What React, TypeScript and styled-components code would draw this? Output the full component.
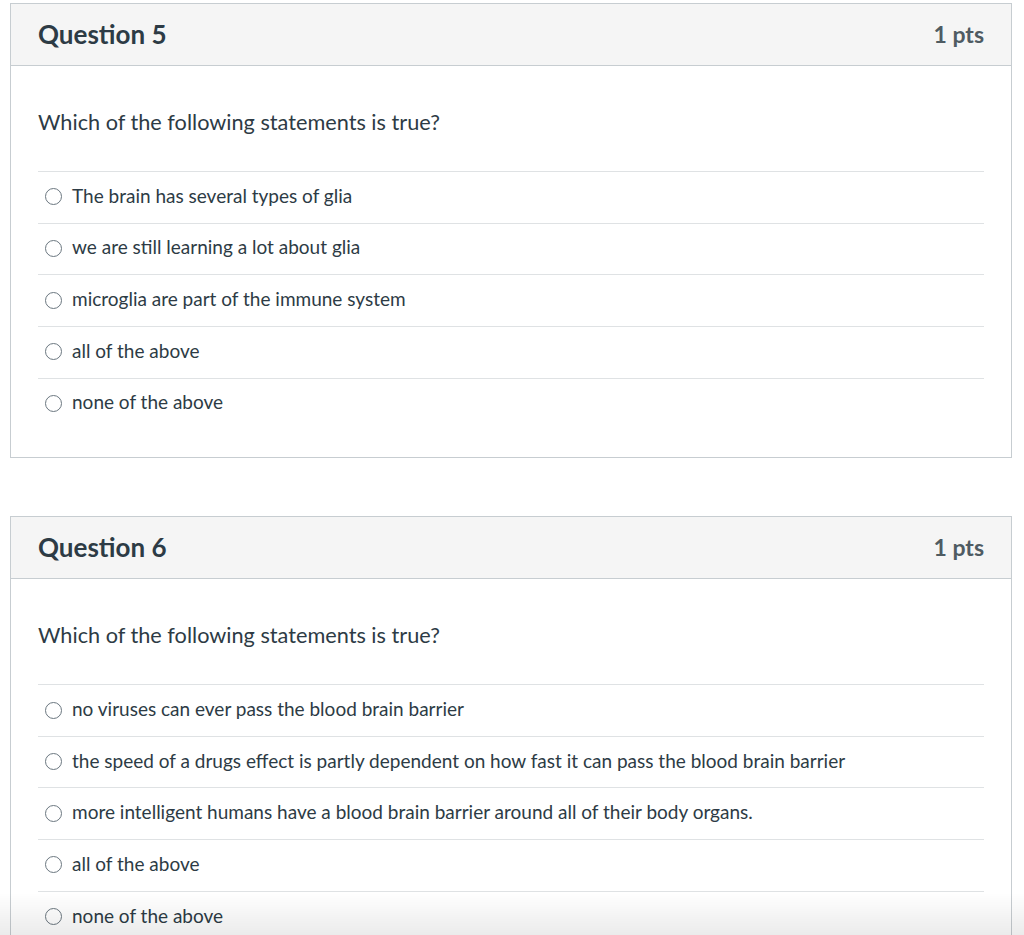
import React from "react";
import styled, { createGlobalStyle } from "styled-components";

const GlobalStyle = createGlobalStyle`
  html, body { margin: 0; padding: 0; background: #ffffff; }
  body { font-family: Lato, "Open Sans", "Liberation Sans", sans-serif; color: #2d3b45; }
  * { box-sizing: border-box; }
`;

const Page = styled.div`
  padding: 3px 12px 0 10px;
  display: flex;
  flex-direction: column;
  gap: 58px;
`;

const Card = styled.section`
  width: 1002px;
  border: 1px solid #c7cdd1;
  background: #ffffff;
`;

const Header = styled.header`
  height: 62px;
  background: #f5f5f5;
  border-bottom: 1px solid #c7cdd1;
  display: flex;
  align-items: center;
  justify-content: space-between;
  padding: 0 27px 2px;
`;

const Title = styled.h2`
  margin: 0;
  font-size: 26px;
  font-weight: 700;
  color: #2d3b45;
`;

const Points = styled.span`
  font-size: 23px;
  font-weight: 700;
  color: #4f5b62;
`;

const Body = styled.div`
  padding: 41px 27px 28px;
`;

const Prompt = styled.p`
  margin: 0 0 34px;
  font-size: 21.7px;
  line-height: 30px;
`;

const Answers = styled.ul`
  list-style: none;
  margin: 0;
  padding: 0;
`;

const Answer = styled.li`
  height: 51.65px;
  border-top: 1px solid #dfe2e4;
  display: flex;
  align-items: center;
  gap: 10px;
  padding: 0 0 4px 7px;
  font-size: 19px;
`;

const Radio = styled.span`
  width: 17px;
  height: 17px;
  border-radius: 50%;
  border: 1.5px solid #6b7780;
  background: #fff;
  flex: none;
  margin-top: 3px;
`;

const BottomFade = styled.div`
  position: fixed;
  left: 0;
  right: 0;
  bottom: 0;
  height: 42px;
  pointer-events: none;
  background: linear-gradient(to bottom, rgba(0,0,0,0), rgba(0,0,0,0.08));
`;

type Q = { n: number; pts: string; prompt: string; answers: string[] };

const questions: Q[] = [
  {
    n: 5,
    pts: "1 pts",
    prompt: "Which of the following statements is true?",
    answers: [
      "The brain has several types of glia",
      "we are still learning a lot about glia",
      "microglia are part of the immune system",
      "all of the above",
      "none of the above",
    ],
  },
  {
    n: 6,
    pts: "1 pts",
    prompt: "Which of the following statements is true?",
    answers: [
      "no viruses can ever pass the blood brain barrier",
      "the speed of a drugs effect is partly dependent on how fast it can pass the blood brain barrier",
      "more intelligent humans have a blood brain barrier around all of their body organs.",
      "all of the above",
      "none of the above",
    ],
  },
];

export default function App() {
  return (
    <>
      <GlobalStyle />
      <Page>
        {questions.map((q) => (
          <Card key={q.n}>
            <Header>
              <Title>Question {q.n}</Title>
              <Points>{q.pts}</Points>
            </Header>
            <Body>
              <Prompt>{q.prompt}</Prompt>
              <Answers>
                {q.answers.map((a) => (
                  <Answer key={a}>
                    <Radio />
                    <span>{a}</span>
                  </Answer>
                ))}
              </Answers>
            </Body>
          </Card>
        ))}
      </Page>
      <BottomFade />
    </>
  );
}
